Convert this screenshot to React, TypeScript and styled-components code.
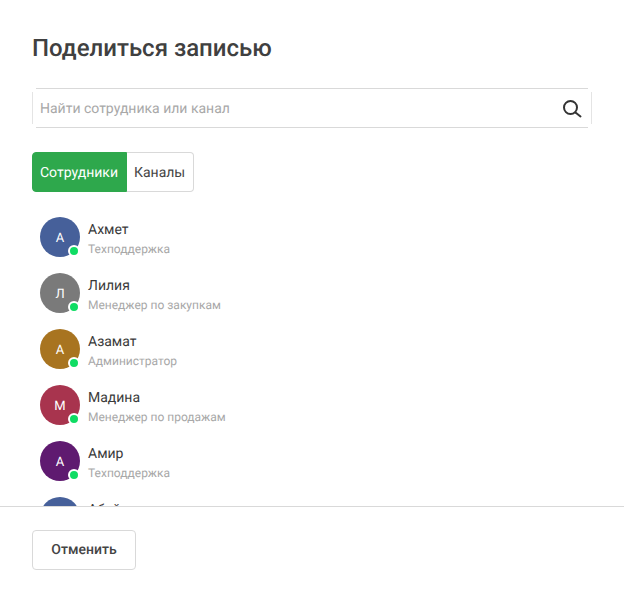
import React from "react";
import styled, { createGlobalStyle } from "styled-components";

const GlobalStyle = createGlobalStyle`
  html, body {
    margin: 0;
    padding: 0;
    background: #fff;
    font-family: Roboto, "Liberation Sans", sans-serif;
    text-rendering: geometricPrecision;
  }
  button, input {
    text-rendering: geometricPrecision;
  }
`;

const Page = styled.div`
  width: 624px;
  height: 602px;
  display: flex;
  flex-direction: column;
  overflow: hidden;
`;
const Body = styled.div`
  height: 506px;
  padding: 32px 32px 0;
  box-sizing: border-box;
  overflow: hidden;
  flex: none;
`;
const Title = styled.h2`
  margin: 0 0 24px;
  font-size: 24px;
  line-height: 32px;
  font-weight: 500;
  color: #404040;
`;
const SearchBox = styled.div`
  height: 40px;
  box-sizing: border-box;
  display: flex;
  align-items: center;
  justify-content: space-between;
  padding: 0 10px 0 8px;
  margin-bottom: 24px;
  background:
    linear-gradient(#d9d9d9, #d9d9d9) 4px 0 / calc(100% - 8px) 1px no-repeat,
    linear-gradient(#d9d9d9, #d9d9d9) 4px 100% / calc(100% - 8px) 1px no-repeat,
    linear-gradient(#e4e4e4, #e4e4e4) 0 4px / 1px calc(100% - 8px) no-repeat,
    linear-gradient(#e4e4e4, #e4e4e4) 100% 4px / 1px calc(100% - 8px) no-repeat;
`;
const SearchInput = styled.input`
  flex: 1;
  border: 0;
  outline: 0;
  padding: 2px 0 0;
  background: transparent;
  font: 400 14px Roboto, sans-serif;
  color: #333;
  &::placeholder {
    color: #a8a8a8;
    opacity: 1;
  }
`;
const Tabs = styled.div`
  display: flex;
  height: 40px;
  margin-bottom: 17px;
`;
const Tab = styled.button<{ $active?: boolean }>`
  box-sizing: border-box;
  height: 40px;
  padding: 2px 8px 0 7px;
  font: 400 14px Roboto, sans-serif;
  background: ${(p) => (p.$active ? "#2ea84c" : "#fff")};
  color: ${(p) => (p.$active ? "#fff" : "#444")};
  border: 1px solid ${(p) => (p.$active ? "#2ea84c" : "#d9d9d9")};
  border-left-width: ${(p) => (p.$active ? "1px" : "0")};
  border-radius: ${(p) => (p.$active ? "4px 0 0 4px" : "0 4px 4px 0")};
`;
const List = styled.div`
  display: flex;
  flex-direction: column;
`;
const Row = styled.div`
  display: flex;
  align-items: center;
  gap: 8px;
  height: 56px;
  padding-left: 8px;
`;
const Avatar = styled.div<{ $color: string }>`
  position: relative;
  width: 40px;
  height: 40px;
  flex: none;
  border-radius: 50%;
  background: ${(p) => p.$color};
  color: #fff;
  font-size: 13px;
  padding-top: 2px;
  box-sizing: border-box;
  display: flex;
  align-items: center;
  justify-content: center;
`;
const Status = styled.span`
  position: absolute;
  right: 0;
  bottom: 0;
  width: 8px;
  height: 8px;
  border: 2px solid #fff;
  border-radius: 50%;
  background: #0fdc63;
`;
const Info = styled.div`
  display: flex;
  flex-direction: column;
  padding-top: 2px;
`;
const Name = styled.div`
  font-size: 14px;
  line-height: 22px;
  color: #3a3a3a;
`;
const Role = styled.div`
  font-size: 12px;
  line-height: 16px;
  color: #a8a8a8;
`;
const Footer = styled.div`
  border-top: 1px solid #d9d9d9;
  padding: 23px 32px 0;
`;
const CancelButton = styled.button`
  box-sizing: border-box;
  width: 104px;
  height: 40px;
  background: #fff;
  border: 1px solid #d9d9d9;
  border-radius: 4px;
  font: 500 14px Roboto, sans-serif;
  color: #444;
`;

const SearchIcon = () => (
  <svg width="20" height="20" viewBox="0 0 20 20" fill="none" stroke="#333" strokeWidth="2" strokeLinecap="round">
    <circle cx="8.5" cy="9.5" r="6.5" />
    <path d="M13.5 14.5 L18.5 18.5" />
  </svg>
);

const people = [
  { name: "Ахмет", role: "Техподдержка", color: "#46609a" },
  { name: "Лилия", role: "Менеджер по закупкам", color: "#7a7a7a" },
  { name: "Азамат", role: "Администратор", color: "#a87420" },
  { name: "Мадина", role: "Менеджер по продажам", color: "#a8344e" },
  { name: "Амир", role: "Техподдержка", color: "#5f1a70" },
  { name: "Абай", role: "Техподдержка", color: "#46609a" },
];

const App = () => {
  return (
    <>
      <GlobalStyle />
      <Page>
        <Body>
          <Title>Поделиться записью</Title>
          <SearchBox>
            <SearchInput placeholder="Найти сотрудника или канал" />
            <SearchIcon />
          </SearchBox>
          <Tabs>
            <Tab $active>Сотрудники</Tab>
            <Tab>Каналы</Tab>
          </Tabs>
          <List>
            {people.map((p, k) => (
              <Row key={k}>
                <Avatar $color={p.color}>
                  {p.name[0]}
                  <Status />
                </Avatar>
                <Info>
                  <Name>{p.name}</Name>
                  <Role>{p.role}</Role>
                </Info>
              </Row>
            ))}
          </List>
        </Body>
        <Footer>
          <CancelButton>Отменить</CancelButton>
        </Footer>
      </Page>
    </>
  );
};

export default App;
